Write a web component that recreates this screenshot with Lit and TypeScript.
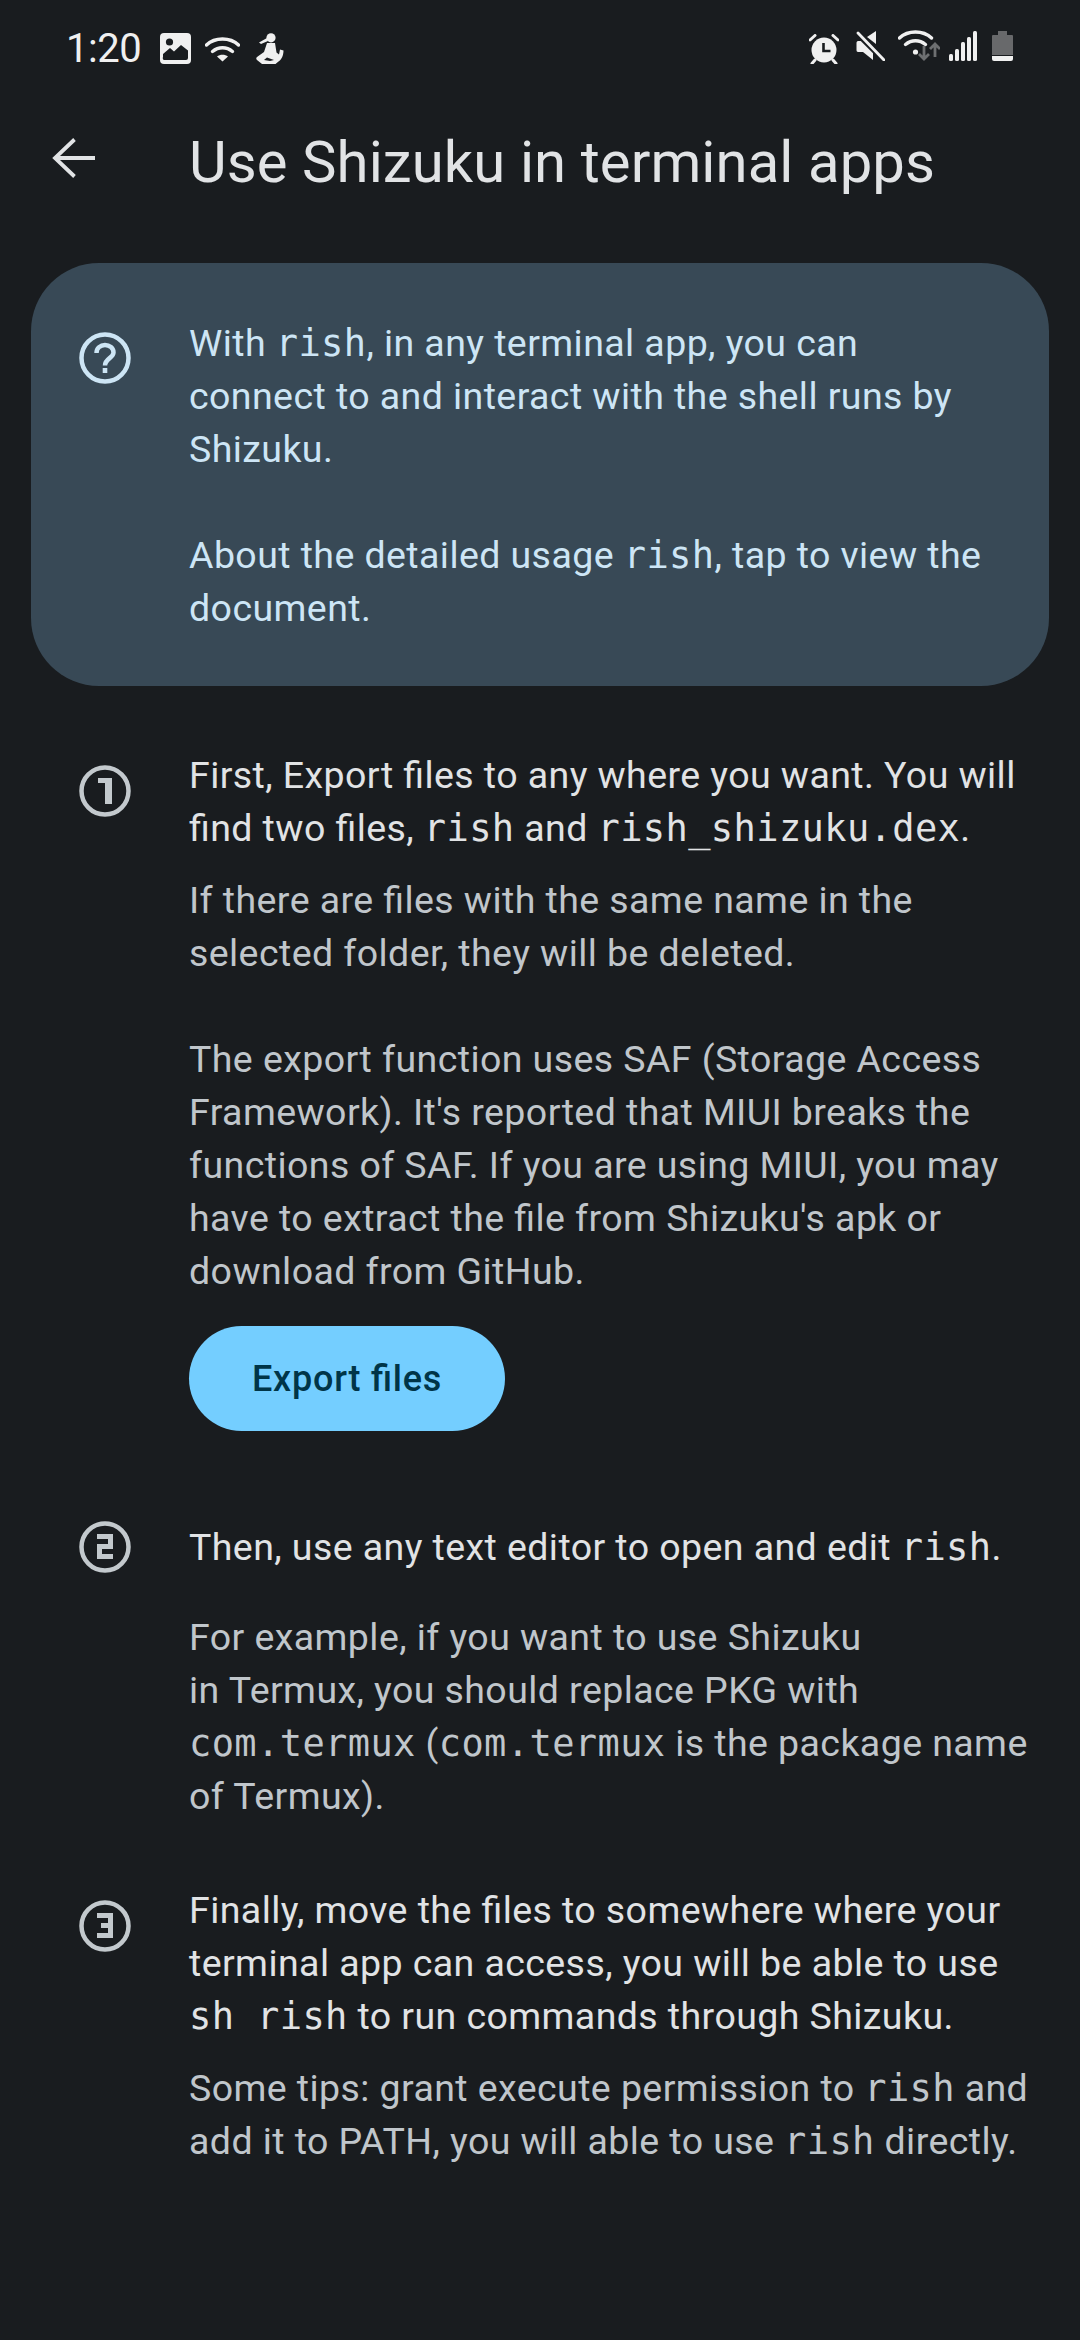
import { LitElement, html, css, svg } from 'lit';
import { customElement } from 'lit/decorators.js';

const imageIcon = html`<svg width="31" height="31" viewBox="0 0 31 31">
  <rect width="31" height="31" rx="4" fill="#f0f0f0" />
  <circle cx="9.5" cy="9" r="3.600" fill="#191c1f" />
  <path d="M3 24v-3l7-6 4 3.500 7-6.500 7 5.500V25a2 2 0 0 1-2 2H5a2 2 0 0 1-2-3z" fill="#191c1f" />
</svg>`;

const wifiArcs = (stroke: string) => svg`
  <path d="M1.500 9C10 1 25 1 33.500 9" fill="none" stroke=${stroke} stroke-width="3.400" stroke-linecap="round" />
  <path d="M7.500 15.500c6-5 14-5 20 0" fill="none" stroke=${stroke} stroke-width="3.400" stroke-linecap="round" />
`;

const wifiIcon = html`<svg width="35" height="26" viewBox="0 0 35 26">
  ${wifiArcs('#f0f0f0')}
  <path d="M12 20.500c3-2.400 8-2.400 11 0l-5.500 5z" fill="#f0f0f0" />
</svg>`;

const personIcon = html`<svg width="28" height="31" viewBox="0 0 28 31">
  <circle cx="15" cy="4.800" r="4.600" fill="#f0f0f0" />
  <path d="M11 5L3 9.500l2 1.500 7-3z" fill="#f0f0f0" />
  <path d="M11 10h8l1.500 9.500 2.500 2 1-5 3.500 1c0 5-2 9-5 11l-3 2.500H6l-5-4c-1-1-1-2 0-3l7-5z" fill="#f0f0f0" />
  <path d="M11 24.500l-3 2.500 6 1 4-1z" fill="#191c1f" />
</svg>`;

const alarmIcon = html`<svg width="30" height="30" viewBox="0 0 30 30">
  <circle cx="15" cy="16" r="12.500" fill="#f0f0f0" />
  <path d="M1 6l5-4.500M29 6l-5-4.500M6 26l-3 3.500M24 26l3 3.500" stroke="#f0f0f0" stroke-width="3" stroke-linecap="round" />
  <path d="M14.500 9v8h7" fill="none" stroke="#191c1f" stroke-width="2.600" />
</svg>`;

const muteIcon = html`<svg width="30" height="30" viewBox="0 0 30 30">
  <path d="M9 10H3c-1 0-1.500 1-1.500 2v7c0 1 .5 2 1.500 2h5l10 8V17zM21 13V0l-9 6z" fill="#f0f0f0" />
  <path d="M2 2l27 27" stroke="#191c1f" stroke-width="6" />
  <path d="M3 2l26 27" stroke="#f0f0f0" stroke-width="2.800" stroke-linecap="round" />
</svg>`;

const wifiDataIcon = html`<svg width="42" height="32" viewBox="0 0 42 32">
  ${wifiArcs('#f0f0f0')}
  <circle cx="17.500" cy="23" r="2.600" fill="#f0f0f0" />
  <path d="M26 17v13M21 25l5 5 5-5M37 28V15M32 20l5-5 5 5" fill="none" stroke="#6d6f71" stroke-width="2.800" />
</svg>`;

const signalIcon = html`<svg width="28" height="30" viewBox="0 0 28 30">
  ${[23, 18, 11, 6, 0].map(
    (top, i) => svg`<rect x=${i * 6} y=${top} width="4" height=${30 - top} rx="1.500" fill="#f0f0f0" />`,
  )}
</svg>`;

const batteryIcon = html`<svg width="21" height="30" viewBox="0 0 21 30">
  <path d="M6 0h9v4h5a1 1 0 0 1 1 1v19H0V5a1 1 0 0 1 1-1h5z" fill="#68696b" />
  <path d="M0 25h21v3a2 2 0 0 1-2 2H2a2 2 0 0 1-2-2z" fill="#f0f0f0" />
</svg>`;

const backIcon = html`<svg class="back" width="43" height="42" viewBox="0 0 43 42">
  <path d="M43 21H4M22.500 2.500L3 21l19.500 18.500" fill="none" stroke="#e1e3e5" stroke-width="3.800" />
</svg>`;

const helpIcon = html`<svg width="52" height="52" viewBox="0 0 52 52">
  <circle cx="26" cy="26" r="23.500" fill="none" stroke="currentColor" stroke-width="4.500" />
  <path d="M17.500 21c0-5 4-8 8.500-8s8.500 3 8.500 7.500c0 5.500-8.500 6-8.500 13" fill="none" stroke="currentColor" stroke-width="4.500" />
  <rect x="23.700" y="36" width="4.600" height="5" fill="currentColor" />
</svg>`;

// digit shapes for the numbered step badges
const stepDigits = [
  svg`<path d="M19 13h14v26h-7V18h-7z" fill="currentColor" />`,
  svg`<path d="M18 15.500h13.500v10H20.500v10H34" fill="none" stroke="currentColor" stroke-width="5" />`,
  svg`<path d="M18 15.500h13.500v20H18M22 25.500h9.500" fill="none" stroke="currentColor" stroke-width="5" />`,
];

const stepIcon = (index: number) => html`<svg width="52" height="52" viewBox="0 0 52 52">
  <circle cx="26" cy="26" r="23.500" fill="none" stroke="currentColor" stroke-width="4.500" />
  ${stepDigits[index]}
</svg>`;

const mono = (text: string) => html`<code>${text}</code>`;

@customElement('app-root')
export class AppRoot extends LitElement {
  static styles = css`
    :host {
      display: block;
      width: 1080px;
      height: 2340px;
      overflow: hidden;
      background: #191c1f;
      color: #e1e3e5;
      font-family: Roboto, sans-serif;
      font-size: 37.5px;
      line-height: 53px;
      letter-spacing: 0.42px;
      font-feature-settings: 'liga' 1;
    }

    code {
      font-family: 'DejaVu Sans Mono', monospace;
      font-size: 37px;
      letter-spacing: 0.4px;
    }

    .status {
      display: flex;
      justify-content: space-between;
      align-items: center;
      height: 97px;
      padding: 0 67px 0 66px;
    }

    .status-group {
      display: flex;
      align-items: center;
    }

    .left svg + svg {
      margin-left: 14px;
    }

    .left svg:last-child {
      margin-left: 16px;
    }

    .time {
      width: 94px;
      font-size: 40px;
      line-height: 48px;
      letter-spacing: -0.5px;
      color: #f0f0f0;
    }

    .alarm-gap {
      margin-left: 16px;
    }

    .wifi-gap {
      margin-left: 13px;
    }

    .signal-gap {
      margin-left: 9px;
    }

    .battery-gap {
      margin-left: 15px;
    }

    .toolbar {
      display: flex;
      align-items: center;
      height: 129px;
      padding-left: 52px;
    }

    .back {
      flex: none;
      margin-bottom: 7px;
    }

    .toolbar h1 {
      margin: 0 0 0 94px;
      font-size: 58px;
      font-weight: 400;
      letter-spacing: 0.1px;
      line-height: 70px;
    }

    .card {
      display: flex;
      margin: 37px 31px 0;
      padding: 54px 0 51px;
      border-radius: 68px;
      background: #384956;
      color: #cde5f5;
    }

    .gutter {
      flex: none;
      box-sizing: border-box;
    }

    .card .gutter {
      width: 158px;
      padding: 15px 0 0 48px;
    }

    .gutter svg {
      display: block;
    }

    .step {
      display: flex;
    }

    .step .gutter {
      width: 189px;
      padding-left: 79px;
      color: #c3c9cd;
    }

    .step .low {
      padding-top: 16px;
    }

    p {
      margin: 0;
      white-space: nowrap;
    }

    .sub {
      color: #c0c6cb;
    }

    .first {
      margin-top: 63px;
    }

    .first .sub {
      margin-top: 19px;
    }

    .second {
      margin-top: 90px;
    }

    .second .sub {
      margin-top: 37px;
    }

    .third {
      margin-top: 61px;
    }

    .third .sub {
      margin-top: 19px;
    }

    .gap {
      margin-top: 53px;
    }

    button {
      display: block;
      width: 316px;
      height: 105px;
      margin-top: 28px;
      padding: 0;
      border: none;
      border-radius: 53px;
      background: #74ceff;
      color: #003548;
      font: 500 36px Roboto, sans-serif;
      letter-spacing: 0.75px;
      font-feature-settings: 'liga' 1;
    }
  `;

  render() {
    return html`
      <div class="status">
        <div class="status-group left">
          <span class="time">1:20</span>
          ${imageIcon} ${wifiIcon} ${personIcon}
        </div>
        <div class="status-group">
          ${alarmIcon}
          <span class="alarm-gap">${muteIcon}</span>
          <span class="wifi-gap">${wifiDataIcon}</span>
          <span class="signal-gap">${signalIcon}</span>
          <span class="battery-gap">${batteryIcon}</span>
        </div>
      </div>

      <div class="toolbar">
        ${backIcon}
        <h1>Use Shizuku in terminal apps</h1>
      </div>

      <div class="card">
        <div class="gutter">${helpIcon}</div>
        <div>
          <p>With ${mono('rish')}, in any terminal app, you can</p>
          <p>connect to and interact with the shell runs by</p>
          <p>Shizuku.</p>
          <p class="gap">About the detailed usage ${mono('rish')}, tap to view the</p>
          <p>document.</p>
        </div>
      </div>

      <div class="step first">
        <div class="gutter low">${stepIcon(0)}</div>
        <div>
          <p>First, Export files to any where you want. You will</p>
          <p>find two files, ${mono('rish')} and ${mono('rish_shizuku.dex')}.</p>
          <div class="sub">
            <p>If there are files with the same name in the</p>
            <p>selected folder, they will be deleted.</p>
            <p class="gap">The export function uses SAF (Storage Access</p>
            <p>Framework). It's reported that MIUI breaks the</p>
            <p>functions of SAF. If you are using MIUI, you may</p>
            <p>have to extract the file from Shizuku's apk or</p>
            <p>download from GitHub.</p>
          </div>
          <button>Export files</button>
        </div>
      </div>

      <div class="step second">
        <div class="gutter">${stepIcon(1)}</div>
        <div>
          <p>Then, use any text editor to open and edit ${mono('rish')}.</p>
          <div class="sub">
            <p>For example, if you want to use Shizuku</p>
            <p>in Termux, you should replace PKG with</p>
            <p>${mono('com.termux')} (${mono('com.termux')} is the package name</p>
            <p>of Termux).</p>
          </div>
        </div>
      </div>

      <div class="step third">
        <div class="gutter low">${stepIcon(2)}</div>
        <div>
          <p>Finally, move the files to somewhere where your</p>
          <p>terminal app can access, you will be able to use</p>
          <p>${mono('sh rish')} to run commands through Shizuku.</p>
          <div class="sub">
            <p>Some tips: grant execute permission to ${mono('rish')} and</p>
            <p>add it to PATH, you will able to use ${mono('rish')} directly.</p>
          </div>
        </div>
      </div>
    `;
  }
}
